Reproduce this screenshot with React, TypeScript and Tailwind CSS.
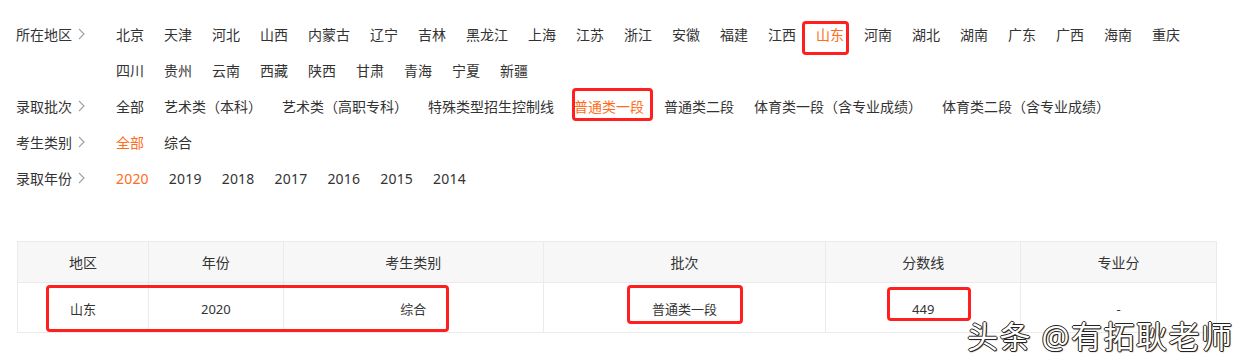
import React from 'react';

const FONT = '"Noto Sans", "Noto Sans CJK SC", sans-serif';

const regions1 = [
  '北京', '天津', '河北', '山西', '内蒙古', '辽宁', '吉林', '黑龙江', '上海', '江苏', '浙江',
  '安徽', '福建', '江西', '山东', '河南', '湖北', '湖南', '广东', '广西', '海南', '重庆',
];
const regions2 = ['四川', '贵州', '云南', '西藏', '陕西', '甘肃', '青海', '宁夏', '新疆'];
const batches = [
  '全部', '艺术类（本科）', '艺术类（高职专科）', '特殊类型招生控制线', '普通类一段',
  '普通类二段', '体育类一段（含专业成绩）', '体育类二段（含专业成绩）',
];
const years = ['2020', '2019', '2018', '2017', '2016', '2015', '2014'];

function Chevron() {
  return (
    <svg width="7" height="12" viewBox="0 0 7 12" className="ml-[6px]">
      <polyline points="1,1 6,6 1,11" fill="none" stroke="#a3a3a3" strokeWidth="1.2" />
    </svg>
  );
}

function Mark({ className }: { className: string }) {
  return <span className={`pointer-events-none absolute rounded-[4px] border-[3px] border-[#ff1f1f] ${className}`} />;
}

function Item({ text, active, box, wide }: { text: string; active?: boolean; box?: string; wide?: boolean }) {
  return (
    <span
      className={`relative mr-5 whitespace-nowrap ${wide ? 'tracking-[0.2px]' : ''} ${
        active ? 'text-[#ff6c1a]' : 'text-[#333]'
      }`}
    >
      {text}
      {box && <Mark className={box} />}
    </span>
  );
}

function FilterRow({ label, children }: { label?: string; children: React.ReactNode }) {
  return (
    <div className="flex h-9 items-center">
      <div className="flex w-[100px] shrink-0 items-center text-[#333]">
        {label}
        {label && <Chevron />}
      </div>
      <div className="flex items-center">{children}</div>
    </div>
  );
}

const cols = [
  { h: '地区', v: '山东', w: 'w-[131px]' },
  { h: '年份', v: '2020', w: 'w-[135px]' },
  { h: '考生类别', v: '综合', w: 'w-[260px]' },
  { h: '批次', v: '普通类一段', w: 'w-[283px]' },
  { h: '分数线', v: '449', w: 'w-[195px]' },
  { h: '专业分', v: '-', w: 'w-[196px]' },
];

export default function App() {
  return (
    <div className="relative h-[361px] w-[1241px] overflow-hidden bg-white text-[14px]" style={{ fontFamily: FONT }}>
      <div className="pl-4 pt-4">
        <FilterRow label="所在地区">
          {regions1.map((r) => (
            <Item
              key={r}
              text={r}
              active={r === '山东'}
              box={r === '山东' ? '-left-[14px] -right-[5px] -top-[3px] h-[34px]' : undefined}
            />
          ))}
        </FilterRow>
        <FilterRow>
          {regions2.map((r) => (
            <Item key={r} text={r} />
          ))}
        </FilterRow>
        <FilterRow label="录取批次">
          {batches.map((b) => (
            <Item
              key={b}
              text={b}
              active={b === '普通类一段'}
              box={b === '普通类一段' ? '-left-[2px] -right-[9px] -top-[8px] h-[33px]' : undefined}
            />
          ))}
        </FilterRow>
        <FilterRow label="考生类别">
          <Item text="全部" active />
          <Item text="综合" />
        </FilterRow>
        <FilterRow label="录取年份">
          {years.map((y, i) => (
            <Item key={y} text={y} active={i === 0} wide />
          ))}
        </FilterRow>
      </div>

      <div className="relative ml-[17px] mt-[45px] w-[1200px] border-l border-t border-[#ebebeb] text-[#333]">
        <div className="flex h-[41px] bg-[#f7f7f7]">
          {cols.map((c) => (
            <div key={c.h} className={`${c.w} flex items-center justify-center border-b border-r border-[#ebebeb]`}>
              {c.h}
            </div>
          ))}
        </div>
        <div className="flex h-[50px]">
          {cols.map((c) => (
            <div key={c.h} className={`${c.w} flex items-center justify-center border-b border-r border-[#ebebeb] pt-1 text-[13px]`}>
              {c.v}
            </div>
          ))}
        </div>
        <Mark className="left-[28px] top-[43px] h-[47px] w-[403px]" />
        <Mark className="left-[609px] top-[43px] h-[39px] w-[116px]" />
        <Mark className="left-[869px] top-[45px] h-[34px] w-[84px]" />
      </div>

      <div className="absolute left-[967px] top-[317px] whitespace-nowrap text-[31px] leading-[38px] tracking-[1.5px] text-white [text-shadow:1px_0_0_#222,-1px_0_0_#222,0_1px_0_#222,0_-1px_0_#222,1px_1px_1px_#222]">
        头条 @有拓耿老师
      </div>
    </div>
  );
}
